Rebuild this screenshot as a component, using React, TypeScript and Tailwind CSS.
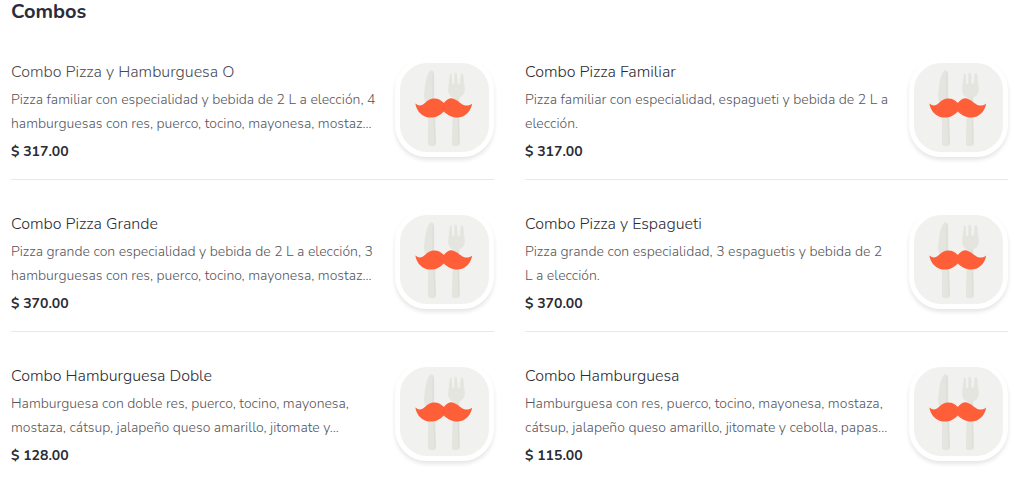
import clsx from 'clsx'

type Combo = {
  name: string
  description: string
  price: string
  muted?: boolean
}

const combos: Combo[] = [
  {
    name: 'Combo Pizza y Hamburguesa O',
    description:
      'Pizza familiar con especialidad y bebida de 2 L a elección, 4\nhamburguesas con res, puerco, tocino, mayonesa, mostaz...',
    price: '$ 317.00',
    muted: true,
  },
  {
    name: 'Combo Pizza Familiar',
    description: 'Pizza familiar con especialidad, espagueti y bebida de 2 L a\nelección.',
    price: '$ 317.00',
  },
  {
    name: 'Combo Pizza Grande',
    description:
      'Pizza grande con especialidad y bebida de 2 L a elección, 3\nhamburguesas con res, puerco, tocino, mayonesa, mostaz...',
    price: '$ 370.00',
  },
  {
    name: 'Combo Pizza y Espagueti',
    description: 'Pizza grande con especialidad, 3 espaguetis y bebida de 2\nL a elección.',
    price: '$ 370.00',
  },
  {
    name: 'Combo Hamburguesa Doble',
    description:
      'Hamburguesa con doble res, puerco, tocino, mayonesa,\nmostaza, cátsup, jalapeño queso amarillo, jitomate y...',
    price: '$ 128.00',
  },
  {
    name: 'Combo Hamburguesa',
    description:
      'Hamburguesa con res, puerco, tocino, mayonesa, mostaza,\ncátsup, jalapeño queso amarillo, jitomate y cebolla, papas...',
    price: '$ 115.00',
  },
]

function Cutlery() {
  return (
    <svg viewBox="0 -1 90 90" className="size-full" aria-hidden="true">
      {/* Knife */}
      <path
        d="M31 6.500C27.500 8 25.500 19 24.500 29C24.200 33 24.500 37 26 38H28.500L28.300 81C28.300 84 36.500 84 36.500 81L35.500 48L34.500 38V10C34.500 7.500 33 6 31 6.500Z"
        fill="#e4e5df"
      />
      <path d="M33.500 9V38L35.500 81" stroke="#dcddd6" fill="none" />
      {/* Fork */}
      <path
        d="M50.500 9.500C51.500 9 52.300 10 52.400 12L52.800 20H54.800L55 10C55.200 8.500 57.500 8.500 57.700 10L58.300 20H60.300L61.500 10.500C61.800 9 64 9 64 11L65.500 25C65.800 30 63.500 32 60 34L60.500 81C60.500 84 52.500 84 52.500 81L53.500 34C50 32 48.300 29 48.700 25Z"
        fill="#e4e5df"
      />
      <path d="M58.500 34L59.500 81" stroke="#dcddd6" fill="none" />
      {/* Moustache */}
      <path
        d="M15.500 40C18.500 42.500 21.500 42.500 24 40.500C27 37.500 30 34.800 34.500 34.800C39 34.800 42 36.500 44.300 39.500C47 36.500 50 34.300 53 34.800C57 35.500 59.500 38.500 62.500 40.500C66 42.800 70 42.500 73 40C72 46 68.500 51 63.500 53C56 56 48.500 52.500 44.300 48C40 53 33 55.500 26.500 53.500C20 51.500 16.500 46 15.500 40Z"
        fill="#ff5f38"
      />
    </svg>
  )
}

function ComboCard({ combo }: { combo: Combo }) {
  return (
    <button
      type="button"
      className="flex items-start gap-4 border-b border-[#e8e8e8] pb-[15px] text-left text-[#2b2b33]
                 last:border-none last:pb-0 nth-last-2:border-none nth-last-2:pb-0"
    >
      <span className="flex min-w-0 flex-1 flex-col gap-1 pt-0.5">
        <span className={clsx('text-base leading-6 font-light', combo.muted && 'text-[#4a4a4f]')}>
          {combo.name}
        </span>
        <span className="whitespace-pre text-sm leading-6 font-light text-[#56565b]">
          {combo.description}
        </span>
        <span className="text-sm leading-6 font-bold">{combo.price}</span>
      </span>
      <span className="size-[99px] shrink-0 rounded-[32px] border-5 border-white bg-[#f1f1f0] shadow-[0_3px_4px_rgba(0,0,0,0.1)]">
        <Cutlery />
      </span>
    </button>
  )
}

export default function App() {
  return (
    <section className="bg-white pr-4 pl-[11px] font-['Nunito','Lato',sans-serif]">
      <h2 className="text-xl leading-6 font-bold text-[#2c2c3c]">Combos</h2>
      <div className="mt-[34px] grid grid-cols-2 gap-x-[31px] gap-y-[30px]">
        {combos.map((combo) => (
          <ComboCard key={combo.name} combo={combo} />
        ))}
      </div>
    </section>
  )
}
